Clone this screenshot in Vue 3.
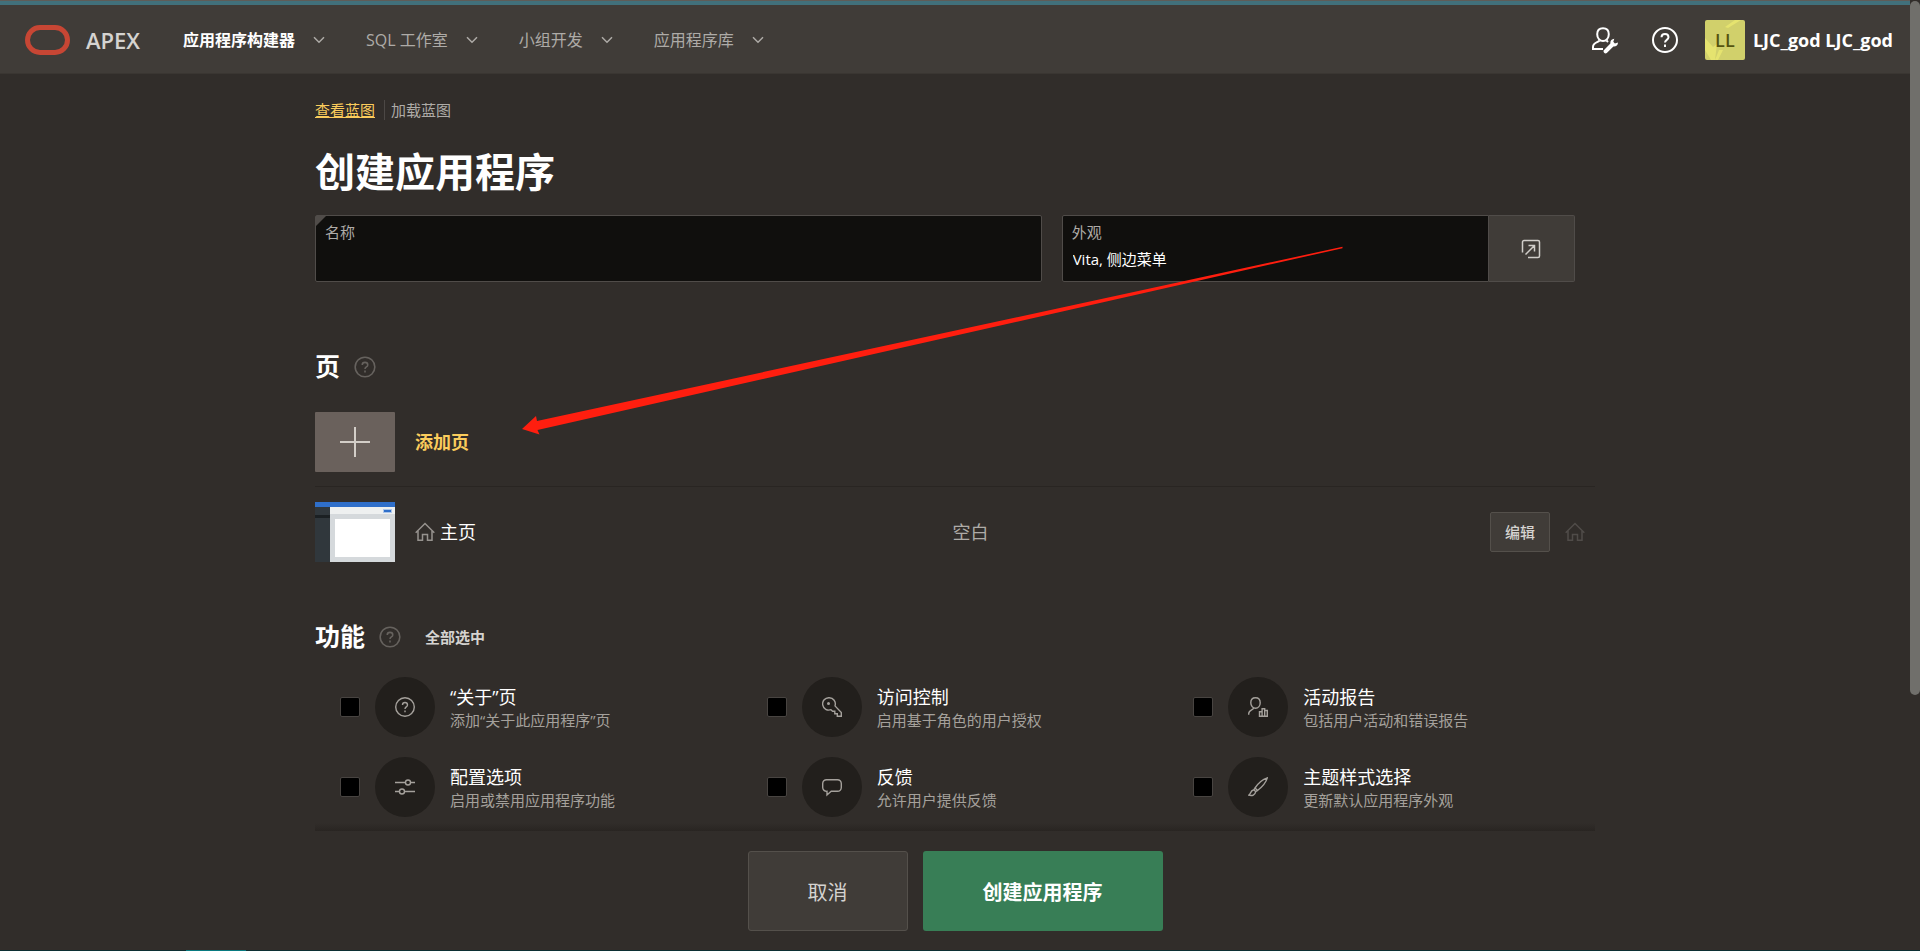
<script setup>
import { ref } from "vue";

const menus = [
  { label: "应用程序构建器", current: true },
  { label: "SQL 工作室" },
  { label: "小组开发" },
  { label: "应用程序库" },
];

const appName = ref("");
const appearance = ref("Vita, 侧边菜单");

const features = ref([
  { id: "about", title: "“关于”页", desc: "添加“关于此应用程序”页", checked: false },
  { id: "access", title: "访问控制", desc: "启用基于角色的用户授权", checked: false },
  { id: "activity", title: "活动报告", desc: "包括用户活动和错误报告", checked: false },
  { id: "config", title: "配置选项", desc: "启用或禁用应用程序功能", checked: false },
  { id: "feedback", title: "反馈", desc: "允许用户提供反馈", checked: false },
  { id: "theme", title: "主题样式选择", desc: "更新默认应用程序外观", checked: false },
]);

function checkAll() {
  features.value.forEach((f) => (f.checked = true));
}
</script>

<template>
  <div class="page">
    <header class="header">
      <a class="brand" href="#">
        <svg width="45" height="30" viewBox="0 0 45 30">
          <rect x="2.5" y="2.5" width="40" height="25" rx="12.5" fill="none" stroke="#c74634" stroke-width="5" />
        </svg>
        <span>APEX</span>
      </a>
      <nav class="menus">
        <button v-for="m in menus" :key="m.label" type="button" class="menu" :class="{ current: m.current }">
          {{ m.label }}
          <svg width="12" height="8" viewBox="0 0 12 8"><path d="M1 1.2l5 5 5-5" /></svg>
        </button>
      </nav>
      <div class="tools">
        <button type="button" class="tool" aria-label="管理">
          <svg width="28" height="28" viewBox="0 0 28 28">
            <path d="M12 2.200c3.600 0 5.800 2.400 5.800 6 0 4-2.600 6.800-5.800 6.800s-5.800-2.800-5.800-6.800c0-3.600 2.200-6 5.800-6z" />
            <path d="M8.500 14.500c-1 2-6.500 2-6.500 6.500v2h10" />
            <path d="M15.500 14.500l1.500 1.500" />
            <path class="solid" d="M12.800 24.200l6.600-6.700c-.4-2.300 1-4.400 3.900-4.700l-1 3 1.600 1.600 3.100-1c0 2.900-2.100 4.400-4.600 4.100l-6.600 6.500c-1.800 1.300-4.100-.9-3-2.800z" />
          </svg>
        </button>
        <button type="button" class="tool" aria-label="帮助">
          <svg width="28" height="28" viewBox="0 0 28 28">
            <circle cx="14" cy="14" r="12" />
            <path d="M10.500 11.300c0-4.300 7-4.300 7 0 0 2.700-3.500 2.400-3.500 5.200M14 18.500v2.400" />
          </svg>
        </button>
        <a class="user" href="#">
          <span class="avatar">
            <svg width="40" height="40" viewBox="0 0 40 40">
              <path d="M0 18l8 9 4-3-2 16h-4L0 30zM20 7l10-7h6L23 8zM14 30l4 0-5 10h-3z" />
            </svg>
            <span>LL</span>
          </span>
          LJC_god LJC_god
        </a>
      </div>
    </header>

    <main class="content">
      <div class="links">
        <a href="#" class="active">查看蓝图</a>
        <a href="#">加载蓝图</a>
      </div>
      <h1>创建应用程序</h1>

      <div class="fields">
        <div class="field required name">
          <label for="appName">名称</label>
          <input id="appName" v-model="appName" type="text" />
        </div>
        <div class="look">
          <div class="field">
            <label for="appearance">外观</label>
            <input id="appearance" v-model="appearance" type="text" readonly />
          </div>
          <button type="button" class="pick" aria-label="设置外观">
            <svg width="20" height="20" viewBox="0 0 20 20">
              <path d="M1.500 13.500V3A1.500 1.500 0 0 1 3 1.500h14A1.500 1.500 0 0 1 18.500 3v14a1.500 1.500 0 0 1-1.500 1.500H7M4.500 15.500l9-9M7.500 6.500h6v6" />
            </svg>
          </button>
        </div>
      </div>

      <section>
        <div class="heading">
          <h2>页</h2>
          <button type="button" class="help" aria-label="页帮助">
            <svg width="22" height="22" viewBox="0 0 28 28">
              <circle cx="14" cy="14" r="12.500" />
              <path d="M10.500 11.300c0-4.300 7-4.300 7 0 0 2.700-3.500 2.400-3.500 5.200M14 18.500v2.400" />
            </svg>
          </button>
        </div>

        <button type="button" class="addPage">
          <span class="plus">
            <svg width="30" height="30" viewBox="0 0 30 30"><path d="M15 0v30M0 15h30" /></svg>
          </span>
          添加页
        </button>

        <div class="pageRow">
          <svg class="thumb" width="80" height="60" viewBox="0 0 80 60">
            <rect width="80" height="60" fill="#d5d9dc" />
            <rect y="5" width="15" height="55" fill="#30373c" />
            <rect y="13" width="15" height="3" fill="#1b2023" />
            <rect x="15" y="5" width="65" height="7" fill="#eef0f0" />
            <rect width="80" height="5" fill="#2f6fca" />
            <rect x="68" y="7" width="9" height="4" fill="#adc6ea" />
            <rect x="69" y="8" width="7" height="2" fill="#2f6fca" />
            <rect x="20" y="17" width="55" height="38" fill="#fff" />
          </svg>
          <div class="pageName">
            <svg class="home" width="20" height="20" viewBox="0 0 20 20">
              <path d="M.7 10.800L10 1.500l9.300 9.300M3 9v9.300h4.500v-5.800h5v5.800H17V9" />
            </svg>
            主页
          </div>
          <div class="pageType">空白</div>
          <button type="button" class="edit">编辑</button>
          <svg class="home dim" width="20" height="20" viewBox="0 0 20 20">
            <path d="M.7 10.800L10 1.500l9.300 9.300M3 9v9.300h4.500v-5.800h5v5.800H17V9" />
          </svg>
        </div>
      </section>

      <section>
        <div class="heading">
          <h2>功能</h2>
          <button type="button" class="help" aria-label="功能帮助">
            <svg width="22" height="22" viewBox="0 0 28 28">
              <circle cx="14" cy="14" r="12.500" />
              <path d="M10.500 11.300c0-4.300 7-4.300 7 0 0 2.700-3.500 2.400-3.500 5.200M14 18.500v2.400" />
            </svg>
          </button>
          <button type="button" class="checkAll" @click="checkAll">全部选中</button>
        </div>

        <div class="features">
          <label v-for="f in features" :key="f.id" class="feature">
            <input v-model="f.checked" type="checkbox" />
            <span class="circle">
              <svg width="20" height="20" viewBox="0 0 20 20">
                <template v-if="f.id === 'about'">
                  <circle cx="10" cy="10" r="9.300" />
                  <path d="M7.500 8c0-3.300 5-3.300 5 0 0 2-2.500 1.800-2.500 3.900M10 13.500v1.800" />
                </template>
                <template v-else-if="f.id === 'access'">
                  <path d="M7 .7a6.200 6.200 0 0 1 6 8.200l6.300 6.600v3.800h-4v-2.500h-2.500v-2.500h-2.200L9 12.700A6.200 6.200 0 1 1 7 .7z" />
                  <circle cx="6.500" cy="6.500" r=".8" />
                </template>
                <template v-else-if="f.id === 'activity'">
                  <path d="M7.500.7c3 0 4.700 2.200 4.700 5 0 3-2 5.500-4.700 5.500S2.800 8.700 2.800 5.700c0-2.800 1.700-5 4.700-5zM5.500 11.200c-.5 1.800-4.800 1.800-4.800 5.500v1" />
                  <path d="M11.500 19.300v-4.500h2.600v-3h2.600v1.700h2.600v5.800zM14.100 14.800v4.500M16.700 13.500v5.800" />
                </template>
                <template v-else-if="f.id === 'config'">
                  <path d="M0 5.500h10.500M15.500 5.500H20M0 14.500h4.500M9.500 14.500H20" />
                  <circle cx="13" cy="5.500" r="2.500" />
                  <circle cx="7" cy="14.500" r="2.500" />
                </template>
                <template v-else-if="f.id === 'feedback'">
                  <path d="M4.500 2.700h11a3.800 3.800 0 0 1 3.800 3.800v4a3.800 3.800 0 0 1-3.800 3.800H9.200L5 18v-3.700A3.800 3.800 0 0 1 .7 10.500v-4a3.800 3.800 0 0 1 3.800-3.800z" />
                </template>
                <template v-else>
                  <path d="M7 11C10 6.500 14.500 2.500 19.300.9 18 5.500 13.500 10.500 9.500 13.500zM7 11l2.500 2.500-1.700 1.200-1.900-2zM5.900 12.700l1.900 2c-.8 3.300-3.500 4.500-7 3.500 2-.7 1-4.500 5.100-5.500z" />
                </template>
              </svg>
            </span>
            <span class="text">
              <span class="title">{{ f.title }}</span>
              <span class="desc">{{ f.desc }}</span>
            </span>
          </label>
        </div>
      </section>

      <!-- red annotation arrow pointing at the add page button -->
      <svg class="arrow" width="822" height="190" viewBox="0 0 822 190">
        <path d="M0 183l14-13 1 5L820.500.800v1.400L15.500 184l2 4.500z" />
      </svg>
      <div class="fade"></div>
    </main>

    <footer class="footer">
      <button type="button" class="cancel">取消</button>
      <button type="button" class="create">创建应用程序</button>
    </footer>
    <div class="taskLine"><span></span></div>
    <div class="scrollThumb"></div>
  </div>
</template>

<style>
body {
  background: #312d2a;
}
</style>

<style scoped>
.page {
  position: relative;
  min-height: 100vh;
  box-sizing: border-box;
  padding: 1px 10px 0 0;
  display: flex;
  flex-direction: column;
  color: #fff;
  background: #312d2a;
  font-family: "Open Sans", "Noto Sans CJK SC", sans-serif;
  font-size: 15px;
  line-height: 20px;
}

button {
  padding: 0;
  border: 0;
  background: none;
  color: inherit;
  font: inherit;
  cursor: pointer;
}

a {
  color: inherit;
  text-decoration: none;
}

svg {
  display: block;
  flex: none;
}

path,
circle {
  fill: none;
  stroke: currentColor;
}

.header {
  display: flex;
  align-items: center;
  height: 66px;
  padding: 2px 17px 0 25px;
  background: #403c38;
  border-top: 4px solid #41707b;
  border-bottom: 1px solid #3a3632;
  box-shadow: 0 -1px #5f5c58;
}

.brand {
  display: flex;
  align-items: center;
  gap: 16px;
  width: 158px;
  color: #d5d3d0;
  font-size: 22px;
  font-weight: 600;
}

.menus {
  display: flex;
  gap: 41px;
}

.menu {
  display: flex;
  align-items: center;
  gap: 18px;
  color: #aeaba7;
  font-size: 16px;
}

.menu.current {
  color: #fff;
  font-weight: 700;
}

.menu svg {
  color: #aeaba7;
}

.menu path {
  stroke-width: 1.5;
}

.tools {
  display: flex;
  align-items: center;
  gap: 32px;
  margin-left: auto;
}

.tool path,
.tool circle {
  stroke-width: 2;
}

.tool .solid {
  fill: currentColor;
  stroke: none;
}

.user {
  display: flex;
  align-items: center;
  gap: 8px;
  margin-left: -6px;
  font-size: 18px;
  font-weight: 700;
}

.avatar {
  display: grid;
  width: 40px;
  height: 40px;
  overflow: hidden;
  border-radius: 2px;
  background: #d1d06b;
  color: #55530f;
}

.avatar > * {
  grid-area: 1 / 1;
}

.avatar span {
  place-self: center;
  font-weight: 600;
}

.avatar path {
  fill: #e5e36f;
  stroke: none;
}

.content {
  position: relative;
  width: 1280px;
  max-width: 100%;
  margin: 0 auto;
  padding-top: 26px;
  flex: 1;
  display: flex;
  flex-direction: column;
}

.links {
  display: flex;
  color: #aeaba7;
}

.links .active {
  margin-right: 6px;
  padding-right: 9px;
  border-right: 1px solid #4c4845;
  color: #fbcc5c;
  text-decoration: underline;
  text-underline-offset: 1px;
}

h1 {
  margin: 27px 0 18px;
  font-size: 40px;
  line-height: 50px;
  font-weight: 700;
}

.fields {
  display: grid;
  grid-template-columns: 7fr 5fr;
}

.name,
.look {
  margin-right: 20px;
}

.field {
  position: relative;
  box-sizing: border-box;
  height: 67px;
  padding: 6px 9px;
  border: 1px solid #504c49;
  border-radius: 2px;
  background: #100f0d;
}

.required::before {
  content: "";
  position: absolute;
  left: 0;
  top: 0;
  border-top: 10px solid #504c49;
  border-right: 10px solid transparent;
}

.field label {
  display: block;
  color: #aeaba7;
}

.field input {
  display: block;
  width: 100%;
  height: 20px;
  margin-top: 7px;
  padding: 0 1px;
  box-sizing: border-box;
  border: 0;
  outline: 0;
  background: none;
  color: #fff;
  font: inherit;
}

.look {
  display: flex;
}

.look .field {
  flex: 1;
  border-radius: 2px 0 0 2px;
}

.pick {
  display: flex;
  align-items: center;
  justify-content: center;
  width: 86px;
  border: 1px solid #504c49;
  border-left: 0;
  border-radius: 0 2px 2px 0;
  background: #403c38;
  color: #d0cdc9;
}

.pick path {
  stroke-width: 1.5;
}

.heading {
  display: flex;
  align-items: center;
  gap: 14px;
}

.fields + section {
  margin-top: 66px;
}

section + section {
  margin-top: 56px;
}

h2 {
  margin: 0;
  font-size: 25px;
  line-height: 36px;
  font-weight: 700;
}

.help {
  padding-top: 2px;
  color: #66625e;
}

.help path,
.help circle {
  stroke-width: 2;
}

.checkAll {
  margin-left: 10px;
  padding-top: 2px;
  color: #d5d3d0;
  font-weight: 700;
}

.addPage {
  display: flex;
  align-items: center;
  gap: 20px;
  width: 100%;
  margin-top: 28px;
  padding-bottom: 14px;
  border-bottom: 1px solid #292522;
  color: #fbcc5c;
  font-size: 18px;
  font-weight: 700;
}

.plus {
  display: flex;
  align-items: center;
  justify-content: center;
  width: 80px;
  height: 60px;
  border-radius: 1px;
  background: #6a615c;
  color: #d3cec8;
}

.plus path {
  stroke-width: 2;
}

.pageRow {
  display: flex;
  align-items: center;
  padding: 15px 10px 0 0;
  font-size: 18px;
}

.pageName {
  display: flex;
  align-items: center;
  gap: 5px;
  flex: 1;
  margin-left: 20px;
}

.home {
  color: #96928e;
}

.home path {
  stroke-width: 1.5;
}

.home.dim {
  color: #504c49;
}

.pageType {
  flex: 1;
  color: #aeaba7;
}

.edit {
  width: 60px;
  height: 40px;
  margin-right: 15px;
  border: 1px solid #54504b;
  border-radius: 2px;
  background: #403c38;
  color: #d5d3d0;
  font-size: 15px;
  font-weight: 500;
}

.features {
  display: grid;
  grid-template-columns: repeat(3, 1fr);
  row-gap: 20px;
  margin-top: 23px;
}

.feature {
  display: flex;
  align-items: center;
  gap: 15px;
  padding-left: 25px;
}

.feature input {
  appearance: none;
  box-sizing: border-box;
  width: 20px;
  height: 20px;
  margin: 0;
  border: 1px solid #484441;
  border-radius: 2px;
  background: #000;
}

.feature input:checked {
  box-shadow: inset 0 0 0 4px #000;
  background: #fbcc5c;
}

.circle {
  display: flex;
  align-items: center;
  justify-content: center;
  width: 60px;
  height: 60px;
  border-radius: 50%;
  background: #221f1c;
  color: #a5a19c;
}

.circle path,
.circle circle {
  stroke-width: 1.4;
}

.title,
.desc {
  display: block;
}

.title {
  font-size: 18px;
  line-height: 26px;
}

.desc {
  color: #a5a19c;
}

.arrow {
  position: absolute;
  left: 207px;
  top: 172px;
  pointer-events: none;
}

.arrow path {
  fill: #ff1e0f;
  stroke: none;
}

.fade {
  height: 8px;
  margin-top: auto;
  background: linear-gradient(#312d2a, #292522);
}

.footer {
  display: flex;
  justify-content: center;
  gap: 15px;
  padding: 20px 0 19px;
  font-size: 20px;
}

.footer button {
  height: 80px;
  padding-top: 3px;
  border-radius: 3px;
}

.cancel {
  width: 160px;
  border: 1px solid #54504b;
  background: #403c38;
  color: #d5d3d0;
}

.create {
  width: 240px;
  background: #387e56;
  font-weight: 700;
}

.taskLine {
  height: 1px;
  margin-right: -10px;
  padding-left: 186px;
  background: #0c2f33;
}

.taskLine span {
  display: block;
  width: 60px;
  height: 1px;
  background: #087a80;
}

.scrollThumb {
  position: absolute;
  top: 1px;
  right: 0;
  width: 10px;
  height: 73%;
  border-radius: 5px;
  background: #706f6b;
}
</style>
